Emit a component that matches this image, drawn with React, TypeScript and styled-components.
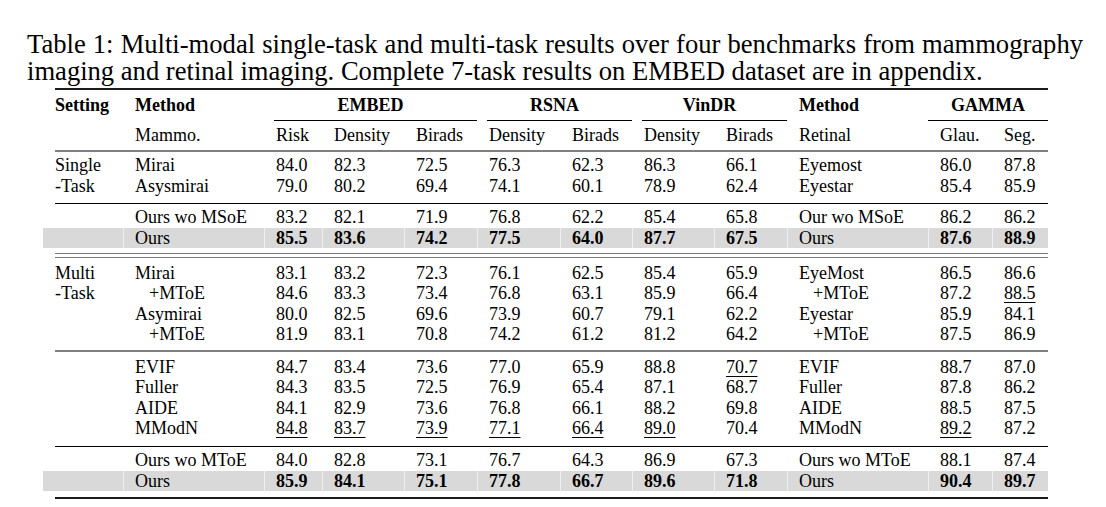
import React from 'react';
import styled, { createGlobalStyle, css } from 'styled-components';

type Row = {
  setting?: string;
  method: string;
  indent?: boolean;
  mammo: string[];
  retinal: string;
  retinalIndent?: boolean;
  gamma: string[];
  best?: boolean;
};

type RuleKind = 'top' | 'mid' | 'thin' | 'thinLow' | 'double' | 'gray' | 'bottom';

// column widths, left to right (table spans 55..1048)
const widths = [68, 141, 58, 82, 73, 83, 72, 82, 73, 141, 64, 56];

const groups: { rows: Row[]; after: RuleKind }[] = [
  {
    rows: [
      { setting: 'Single', method: 'Mirai', mammo: ['84.0', '82.3', '72.5', '76.3', '62.3', '86.3', '66.1'], retinal: 'Eyemost', gamma: ['86.0', '87.8'] },
      { setting: '-Task', method: 'Asysmirai', mammo: ['79.0', '80.2', '69.4', '74.1', '60.1', '78.9', '62.4'], retinal: 'Eyestar', gamma: ['85.4', '85.9'] },
    ],
    after: 'thin',
  },
  {
    rows: [
      { method: 'Ours wo MSoE', mammo: ['83.2', '82.1', '71.9', '76.8', '62.2', '85.4', '65.8'], retinal: 'Our wo MSoE', gamma: ['86.2', '86.2'] },
      { method: 'Ours', best: true, mammo: ['85.5', '83.6', '74.2', '77.5', '64.0', '87.7', '67.5'], retinal: 'Ours', gamma: ['87.6', '88.9'] },
    ],
    after: 'double',
  },
  {
    rows: [
      { setting: 'Multi', method: 'Mirai', mammo: ['83.1', '83.2', '72.3', '76.1', '62.5', '85.4', '65.9'], retinal: 'EyeMost', gamma: ['86.5', '86.6'] },
      { setting: '-Task', method: '+MToE', indent: true, mammo: ['84.6', '83.3', '73.4', '76.8', '63.1', '85.9', '66.4'], retinal: '+MToE', retinalIndent: true, gamma: ['87.2', '_88.5'] },
      { method: 'Asymirai', mammo: ['80.0', '82.5', '69.6', '73.9', '60.7', '79.1', '62.2'], retinal: 'Eyestar', gamma: ['85.9', '84.1'] },
      { method: '+MToE', indent: true, mammo: ['81.9', '83.1', '70.8', '74.2', '61.2', '81.2', '64.2'], retinal: '+MToE', retinalIndent: true, gamma: ['87.5', '86.9'] },
    ],
    after: 'gray',
  },
  {
    rows: [
      { method: 'EVIF', mammo: ['84.7', '83.4', '73.6', '77.0', '65.9', '88.8', '_70.7'], retinal: 'EVIF', gamma: ['88.7', '87.0'] },
      { method: 'Fuller', mammo: ['84.3', '83.5', '72.5', '76.9', '65.4', '87.1', '68.7'], retinal: 'Fuller', gamma: ['87.8', '86.2'] },
      { method: 'AIDE', mammo: ['84.1', '82.9', '73.6', '76.8', '66.1', '88.2', '69.8'], retinal: 'AIDE', gamma: ['88.5', '87.5'] },
      { method: 'MModN', mammo: ['_84.8', '_83.7', '_73.9', '_77.1', '_66.4', '_89.0', '70.4'], retinal: 'MModN', gamma: ['_89.2', '87.2'] },
    ],
    after: 'thinLow',
  },
  {
    rows: [
      { method: 'Ours wo MToE', mammo: ['84.0', '82.8', '73.1', '76.7', '64.3', '86.9', '67.3'], retinal: 'Ours wo MToE', gamma: ['88.1', '87.4'] },
      { method: 'Ours', best: true, mammo: ['85.9', '84.1', '75.1', '77.8', '66.7', '89.6', '71.8'], retinal: 'Ours', gamma: ['90.4', '89.7'] },
    ],
    after: 'bottom',
  },
];

const rules: Record<RuleKind, { above: number; below: number; size: number; color: string; double?: boolean }> = {
  top: { above: 3, below: 1, size: 2, color: '#1c1c1c' },
  mid: { above: 4.5, below: 3.5, size: 2, color: '#808080' },
  thin: { above: 6.5, below: 3.5, size: 1, color: '#000' },
  thinLow: { above: 7, below: 3.5, size: 1, color: '#000' },
  double: { above: 4.5, below: 5, size: 5, color: '#7a7a7a', double: true },
  gray: { above: 5, below: 5, size: 2, color: '#808080' },
  bottom: { above: 6, below: 0, size: 2, color: '#1c1c1c' },
};

const GlobalStyle = createGlobalStyle`
  html, body {
    margin: 0;
    padding: 0;
    background: #fff;
  }
  body {
    font-family: "Liberation Serif", "Times New Roman", serif;
    color: #000;
  }
`;

const Page = styled.div`
  width: 1106px;
  height: 507px;
  padding: 30.5px 0 0 27px;
  box-sizing: border-box;
  overflow: hidden;
`;

// justified like a LaTeX caption: the first line is stretched, the last one is not
const Caption = styled.p`
  margin: 0;
  width: 1056px;
  font-size: 26.6px;
  line-height: 27px;
  text-align: justify;
`;

const Table = styled.table`
  margin: 0.5px 0 0 28px;
  width: 993px;
  table-layout: fixed;
  border-collapse: separate;
  border-spacing: 0;
  font-size: 18px;
  line-height: 20.5px;
`;

const Col = styled.col<{ $w: number }>`
  width: ${p => p.$w}px;
`;

const Th = styled.th<{ $first?: boolean; $bold?: boolean; $top?: number }>`
  padding: ${p => p.$top ?? 0}px 0 0 ${p => (p.$first ? 0 : 12)}px;
  text-align: left;
  vertical-align: top;
  white-space: nowrap;
  font-weight: ${p => (p.$bold ? 700 : 400)};
`;

const GroupTh = styled.th`
  padding: 4px 0 0 0;
  text-align: center;
  vertical-align: top;
  font-weight: 700;
  white-space: nowrap;
`;

const CmidRule = styled.div<{ $trim: number }>`
  margin: 4px 0 0 ${p => p.$trim}px;
  height: 1px;
  background: #000;
`;

const Td = styled.td<{ $first?: boolean; $bold?: boolean; $band?: boolean; $indent?: boolean }>`
  padding: 0 0 0 ${p => (p.$first ? 0 : p.$indent ? 26 : 12)}px;
  white-space: nowrap;
  vertical-align: top;
  font-weight: ${p => (p.$bold ? 700 : 400)};
  ${p =>
    p.$band &&
    css`
      background: #d9d9d9;
      box-shadow: ${p.$first ? '-12px 0 0 #d9d9d9' : 'inset 1px 0 0 #efefef'};
    `}
`;

const RuleCell = styled.td`
  padding: 0;
`;

const Rule = styled.div<{ $above: number; $below: number; $size: number; $color: string; $double?: boolean }>`
  margin: ${p => p.$above}px 0 ${p => p.$below}px;
  height: ${p => p.$size}px;
  box-sizing: border-box;
  ${p =>
    p.$double
      ? css`
          border-top: 1.5px solid ${p.$color};
          border-bottom: 1.5px solid ${p.$color};
        `
      : css`
          background: ${p.$color};
        `}
`;

const Under = styled.span`
  text-decoration: underline;
  text-decoration-thickness: 1px;
  text-underline-offset: 3px;
`;

function Value({ v }: { v: string }) {
  return v.startsWith('_') ? <Under>{v.slice(1)}</Under> : <>{v}</>;
}

function RuleRow({ kind }: { kind: RuleKind }) {
  const r = rules[kind];
  return (
    <tr>
      <RuleCell colSpan={12}>
        <Rule $above={r.above} $below={r.below} $size={r.size} $color={r.color} $double={r.double} />
      </RuleCell>
    </tr>
  );
}

function DataRow({ row }: { row: Row }) {
  const band = !!row.best;
  return (
    <tr>
      <Td $first $band={band}>{row.setting ?? ''}</Td>
      <Td $band={band} $indent={row.indent}>{row.method}</Td>
      {row.mammo.map((v, i) => (
        <Td key={i} $band={band} $bold={band}>
          <Value v={v} />
        </Td>
      ))}
      <Td $band={band} $indent={row.retinalIndent}>{row.retinal}</Td>
      {row.gamma.map((v, i) => (
        <Td key={i} $band={band} $bold={band}>
          <Value v={v} />
        </Td>
      ))}
    </tr>
  );
}

export default function App() {
  return (
    <>
      <GlobalStyle />
      <Page>
        <Caption>
          Table 1: Multi-modal single-task and multi-task results over four benchmarks from mammography
          imaging and retinal imaging. Complete 7-task results on EMBED dataset are in appendix.
        </Caption>
        <Table>
          <colgroup>
            {widths.map((w, i) => (
              <Col key={i} $w={w} />
            ))}
          </colgroup>
          <thead>
            <RuleRow kind="top" />
            <tr>
              <Th $first $bold $top={4}>Setting</Th>
              <Th $bold $top={4}>Method</Th>
              <GroupTh colSpan={3}>
                EMBED
                <CmidRule $trim={10} />
              </GroupTh>
              <GroupTh colSpan={2}>
                RSNA
                <CmidRule $trim={10} />
              </GroupTh>
              <GroupTh colSpan={2}>
                VinDR
                <CmidRule $trim={10} />
              </GroupTh>
              <Th $bold $top={4}>Method</Th>
              <GroupTh colSpan={2}>
                GAMMA
                <CmidRule $trim={0} />
              </GroupTh>
            </tr>
            <tr>
              <Th $first $top={4}></Th>
              <Th $top={4}>Mammo.</Th>
              <Th $top={4}>Risk</Th>
              <Th $top={4}>Density</Th>
              <Th $top={4}>Birads</Th>
              <Th $top={4}>Density</Th>
              <Th $top={4}>Birads</Th>
              <Th $top={4}>Density</Th>
              <Th $top={4}>Birads</Th>
              <Th $top={4}>Retinal</Th>
              <Th $top={4}>Glau.</Th>
              <Th $top={4}>Seg.</Th>
            </tr>
            <RuleRow kind="mid" />
          </thead>
          <tbody>
            {groups.map((g, gi) => (
              <React.Fragment key={gi}>
                {g.rows.map((row, ri) => (
                  <DataRow key={ri} row={row} />
                ))}
                <RuleRow kind={g.after} />
              </React.Fragment>
            ))}
          </tbody>
        </Table>
      </Page>
    </>
  );
}
